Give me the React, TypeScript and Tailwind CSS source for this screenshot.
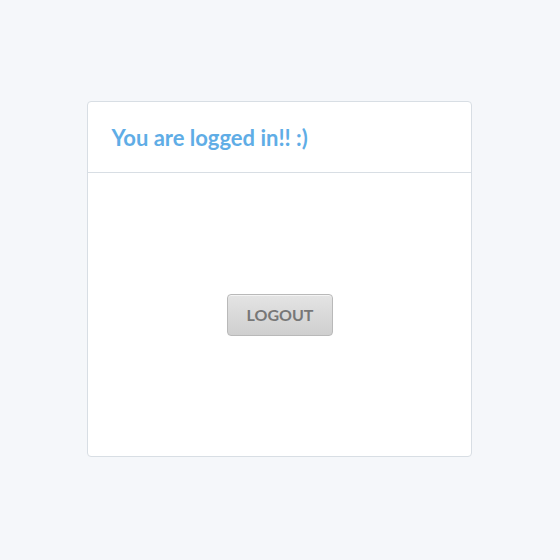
export default function App() {
  return (
    <div className="flex h-[560px] w-[560px] items-center justify-center bg-[#f5f7fa] pb-[2px] pr-[2px] font-['Lato',sans-serif]">
      <div className="w-[385px] rounded-[4px] border border-[#d8dee4] bg-white">
        <div className="flex h-[71px] items-center border-b border-[#d8dee4] px-[24px]">
          <h1 className="text-[22px] font-bold text-[#5fade6]">You are logged in!! :)</h1>
        </div>
        <div className="flex h-[283px] items-center justify-center">
          <button className="ml-[2px] h-[42px] w-[106px] rounded-[4px] border border-[#b9b9b9] bg-gradient-to-b from-[#e4e4e4] to-[#cfcfcf] text-[16px] font-bold text-[#777777] shadow-[inset_0_1px_0_rgba(255,255,255,0.6)]">
            LOGOUT
          </button>
        </div>
      </div>
    </div>
  );
}
